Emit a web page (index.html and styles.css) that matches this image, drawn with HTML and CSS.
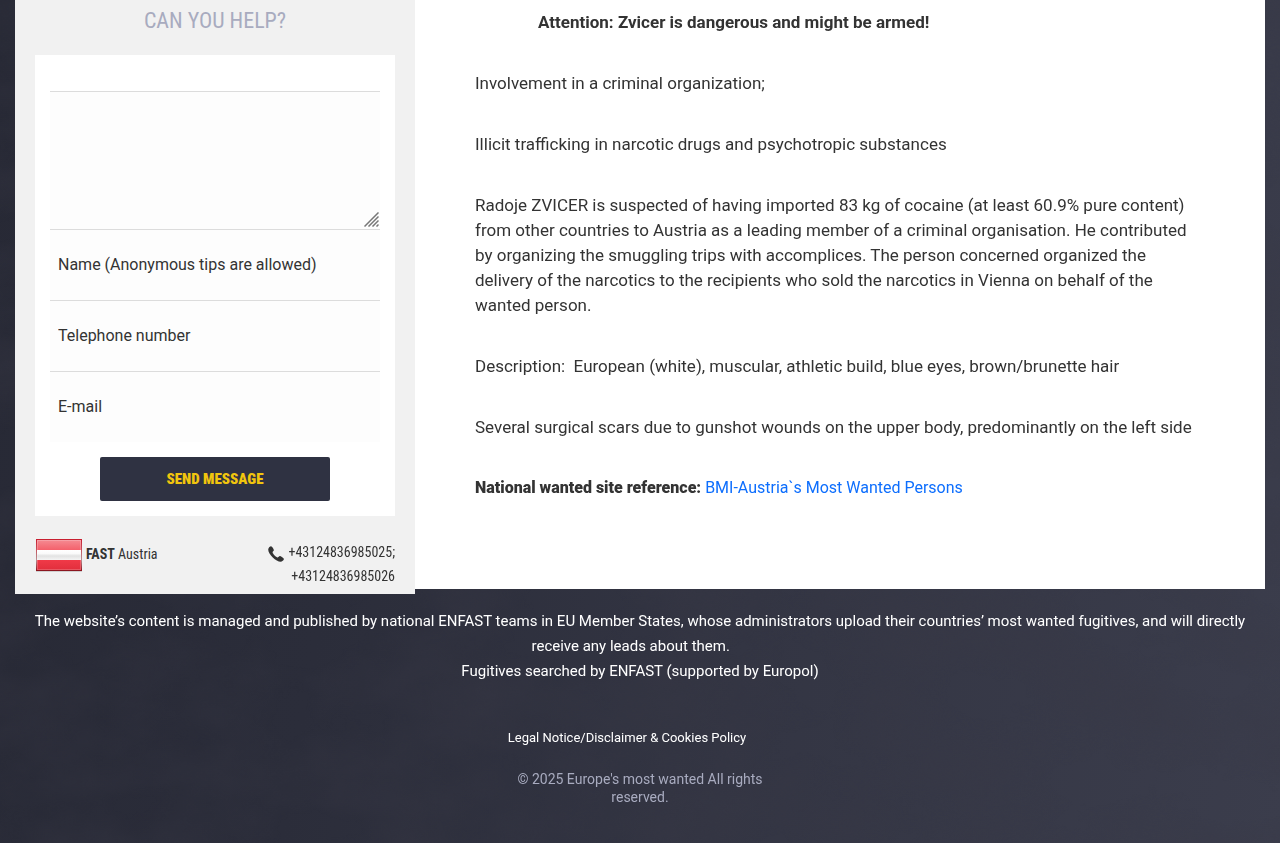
FILE: index.html
```html
<!DOCTYPE html>
<html lang="en">
<head>
<meta charset="utf-8">
<meta name="viewport" content="width=device-width, initial-scale=1">
<title>Europe's most wanted</title>
<link rel="stylesheet" href="styles.css">
</head>
<body>
<svg class="texture" aria-hidden="true">
  <filter id="clouds">
    <feTurbulence type="fractalNoise" baseFrequency="0.008 0.012" numOctaves="7" seed="8"/>
    <feColorMatrix values="0 0 0 0 0.04  0 0 0 0 0.04  0 0 0 0 0.06  0.8 0 0 0 -0.28"/>
  </filter>
  <rect width="100%" height="100%" filter="url(#clouds)"/>
</svg>
<main class="page">
  <aside class="tip">
    <h2 class="tip-title">CAN YOU HELP?</h2>
    <form class="tip-form">
      <div class="message-box">
        <textarea class="field message" aria-label="Message"></textarea>
        <svg class="grip" viewBox="0 0 15 15" aria-hidden="true"><path d="M.5 14.500 14.500.500M4.500 14.500l10-10M8.500 14.500l6-6M12.500 14.500l2-2"/></svg>
      </div>
      <input class="field" type="text" placeholder="Name (Anonymous tips are allowed)" aria-label="Name">
      <input class="field" type="tel" placeholder="Telephone number" aria-label="Telephone number">
      <input class="field" type="email" placeholder="E-mail" aria-label="E-mail">
      <button class="send" type="submit">SEND MESSAGE</button>
    </form>
    <div class="contact">
      <div class="team">
        <svg class="flag" viewBox="0 0 48 36" role="img" aria-label="Austria">
          <defs>
            <linearGradient id="top" x2="0" y2="1"><stop stop-color="#f58f96"/><stop offset="1" stop-color="#f4606b"/></linearGradient>
            <linearGradient id="mid" x2="0" y2="1"><stop stop-color="#fff"/><stop offset=".35" stop-color="#fafafa"/><stop offset=".6" stop-color="#e2e2e2"/><stop offset="1" stop-color="#f4f4f4"/></linearGradient>
            <linearGradient id="low" x2="0" y2="1"><stop stop-color="#f03a48"/><stop offset="1" stop-color="#e02d3b"/></linearGradient>
            <linearGradient id="edge" x2="0" y2="1"><stop stop-color="#c81f30"/><stop offset=".33" stop-color="#c4525c"/><stop offset=".66" stop-color="#b98f92"/><stop offset="1" stop-color="#8c1620"/></linearGradient>
          </defs>
          <rect x="1" y="33" width="46" height="2" fill="#d0d0d0"/>
          <rect x="1" y="2" width="46" height="11" fill="url(#top)"/>
          <rect x="1" y="13" width="46" height="10" fill="url(#mid)"/>
          <rect x="1" y="23" width="46" height="11" fill="url(#low)"/>
          <rect x="2.5" y="3.5" width="43" height="29" fill="none" stroke="#fff" stroke-opacity=".2"/>
          <rect x="1.5" y="2.5" width="45" height="31" fill="none" stroke="url(#edge)"/>
        </svg>
        <span><strong>FAST</strong> Austria</span>
      </div>
      <div class="phones">
        <svg class="phone" viewBox="0 0 16 16" aria-hidden="true"><path d="M.2 3.500C.2 2 1.900.300 3.100.200c.8 0 2.800 3 2.800 3.900 0 1-1.500 1.400-1.300 2.300.3 1.500 3.400 4.600 5 5 .9.200 1.400-1.400 2.300-1.300 1 .1 4 2.100 4 2.900 0 1.300-1.900 2.700-3.300 2.700C8.300 15.700.2 8.400.2 3.500Z"/></svg>
        <span>+43124836985025;<br>+43124836985026</span>
      </div>
    </div>
  </aside>
  <article class="case">
    <p class="attention"><strong>Attention: Zvicer is dangerous and might be armed!</strong></p>
    <p>Involvement in a criminal organization;</p>
    <p>Illicit trafficking in narcotic drugs and psychotropic substances</p>
    <p>Radoje ZVICER is suspected of having imported 83 kg of cocaine (at least 60.9% pure content) from other countries to Austria as a leading member of a criminal organisation. He contributed by organizing the smuggling trips with accomplices. The person concerned organized the delivery of the narcotics to the recipients who sold the narcotics in Vienna on behalf of the wanted person.</p>
    <p>Description:&nbsp; European (white), muscular, athletic build, blue eyes, brown/brunette hair</p>
    <p>Several surgical scars due to gunshot wounds on the upper body, predominantly on the left side</p>
    <div class="reference"><strong>National wanted site reference:</strong> <a href="#">BMI-Austria`s Most Wanted Persons</a></div>
  </article>
</main>
<footer class="footer">
  <p class="managed">The website’s content is managed and published by national ENFAST teams in EU Member States, whose administrators upload their countries’ most wanted fugitives, and will directly receive any leads about them.&nbsp;&nbsp;&nbsp;&nbsp;&nbsp;<br>Fugitives searched by ENFAST (supported by Europol)</p>
  <nav class="legal"><a href="#">Legal Notice/Disclaimer &amp; Cookies Policy</a></nav>
  <p class="copyright">© 2025 Europe's most wanted All rights reserved.</p>
</footer>
</body>
</html>
```
FILE: styles.css
```css
* { box-sizing: border-box; }

body {
  margin: 0;
  min-height: 100vh;
  background: linear-gradient(100deg, #272935 0%, #2b2d3a 30%, #333543 60%, #3b3d4c 100%);
  color: #333;
  font: 16px/24px Roboto, sans-serif;
}

.texture {
  position: fixed;
  inset: 0;
  z-index: -1;
  width: 100%;
  height: 100%;
}

.page {
  display: flex;
  align-items: flex-start;
  margin: 0 15px;
}

.tip {
  flex: 0 0 400px;
  padding: 9px 20px 6px;
  background: #f1f1f1;
  font-family: "Roboto Condensed", "Liberation Sans Narrow", Roboto, sans-serif;
}

.tip-title {
  margin: 0 0 22px;
  color: #a8abbf;
  font-size: 22px;
  font-weight: 400;
  line-height: 24px;
  text-align: center;
}

.tip-form {
  display: flex;
  flex-direction: column;
  padding: 36px 15px 15px;
  background: #fff;
}

.field {
  width: 100%;
  height: 71px;
  padding: 0 8px 2px;
  border: 0;
  border-top: 1px solid #dcdcdc;
  border-radius: 0;
  background: #fdfdfd;
  color: #333;
  font: 16px/24px Roboto, sans-serif;
}

.field::placeholder { color: #333; opacity: 1; }

.message-box { position: relative; }
.message { display: block; height: 138px; resize: vertical; }
.message::-webkit-resizer { background: transparent; }

.grip {
  position: absolute;
  right: 1px;
  bottom: 2px;
  width: 15px;
  height: 15px;
  fill: none;
  stroke: #777;
  stroke-width: 1.5;
  pointer-events: none;
}

.send {
  align-self: center;
  width: 230px;
  height: 44px;
  margin-top: 15px;
  border: 0;
  border-radius: 2px;
  background: #2f3242;
  color: #f1c50e;
  font: 900 15px/24px "Roboto Condensed", "Liberation Sans Narrow", Roboto, sans-serif;
}

.contact {
  display: flex;
  justify-content: space-between;
  padding-top: 24px;
  font-size: 14px;
}

.team { display: flex; align-items: flex-start; gap: 3px; line-height: 28px; }
.flag { width: 48px; height: 36px; margin-top: -3px; }
.phones { display: flex; gap: 4px; text-align: right; }
.phone { width: 16px; height: 16px; margin-top: 6px; fill: #333; }

.case {
  flex: 1;
  min-width: 0;
  padding: 10px 60px 89px;
  background: #fff;
}

.case p {
  margin: 0 0 36px;
  font-size: 17px;
  line-height: 25px;
}

.case .attention { padding-left: 63px; }

.reference a { color: #0d6efd; text-decoration: none; }
.reference strong { font-weight: 900; }

.footer {
  padding: 15px 15px 36px;
  color: #fff;
  text-align: center;
}

.managed {
  margin: 0 0 42px;
  font-size: 15px;
  line-height: 25px;
}

.legal {
  margin: 0 26px 20px 0;
  font-size: 13px;
}

.legal a { color: #fff; text-decoration: none; }

.copyright {
  max-width: 260px;
  margin: 0 auto;
  color: #a8abbf;
  font-size: 14px;
  line-height: 18px;
}
```
